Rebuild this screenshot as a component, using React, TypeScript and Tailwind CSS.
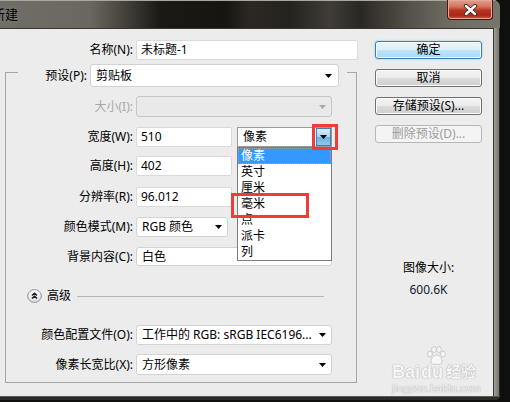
import React from "react";

const F = "font-['Noto_Sans','Noto_Sans_CJK_SC',sans-serif]";

function Arrow({ color = "#000" }: { color?: string }) {
  return (
    <svg width="7" height="4" viewBox="0 0 7 4" className="shrink-0">
      <path d="M0 0H7L3.5 4Z" fill={color} />
    </svg>
  );
}

function Label({ children, disabled, w = "w-[127px]" }: { children: React.ReactNode; disabled?: boolean; w?: string }) {
  return (
    <div className={`${w} shrink-0 text-right text-[12px] leading-[14px] ${disabled ? "text-[#a8a8a8]" : "text-black"}`}>
      {children}
    </div>
  );
}

function Input({ value, w }: { value: string; w: string }) {
  return (
    <div className={`${w} flex h-full items-center rounded-[2px] border border-[#dadada] bg-white pl-[4px] text-[12px] leading-[14px] text-black`}>
      {value}
    </div>
  );
}

function Select({ value, w, pr = "pr-[5px]" }: { value: string; w: string; pr?: string }) {
  return (
    <div className={`${w} ${pr} flex h-full items-center justify-between rounded-[3px] border border-[#d2d2d2] bg-white pl-[5px] text-[12px] leading-[14px] text-black`}>
      <span className="whitespace-nowrap">{value}</span>
      <Arrow />
    </div>
  );
}

function Btn({ children, kind = "normal" }: { children: React.ReactNode; kind?: "normal" | "default" | "disabled" }) {
  const styles = {
    normal:
      "border-[#707070] bg-[linear-gradient(to_bottom,#f3f3f3_0%,#ebebeb_50%,#dcdcdc_50%,#cfcfcf_100%)] text-black shadow-[inset_0_0_0_1px_#fbfbfb]",
    default:
      "border-[#3c7fb1] bg-[linear-gradient(to_bottom,#eaf6fd_0%,#d9f0fc_50%,#bee6fd_50%,#a7d9f5_100%)] text-black shadow-[inset_0_0_0_1px_#ffffff,0_0_2px_#5ec1f3]",
    disabled: "border-[#b5b8ba] bg-[#f4f4f4] text-[#9c9c9c]",
  } as const;
  return (
    <div className={`flex h-[18px] w-[107px] items-center justify-center rounded-[3px] border text-[12px] leading-[14px] ${styles[kind]}`}>
      {children}
    </div>
  );
}

function ExpandIcon() {
  return (
    <svg width="15" height="14" viewBox="0 0 15 14" className="shrink-0">
      <defs>
        <linearGradient id="eg" x1="0" y1="0" x2="0" y2="1">
          <stop offset="0" stopColor="#ffffff" />
          <stop offset="1" stopColor="#dcdcdc" />
        </linearGradient>
      </defs>
      <ellipse cx="7.5" cy="7" rx="6.8" ry="6.4" fill="url(#eg)" stroke="#8e8e8e" strokeWidth="1" />
      <path d="M5 6.6L7.5 4.2L10 6.6M5 9.6L7.5 7.2L10 9.6" stroke="#1a1a1a" strokeWidth="1.4" fill="none" />
    </svg>
  );
}

function CloseBtn() {
  return (
    <div className="mr-[7px] flex h-[20px] w-[46px] items-center justify-center rounded-b-[4px] border border-t-0 border-[#4a1810] bg-[linear-gradient(to_bottom,#e2a190_0%,#d2735e_35%,#b8341f_55%,#a8281a_80%,#c95a40_100%)] shadow-[inset_0_0_0_1px_#e8a898]">
      <svg width="15" height="12" viewBox="0 0 15 12">
        <path d="M3 2L12 10M12 2L3 10" stroke="#3a2a28" strokeWidth="4.2" strokeLinecap="round" />
        <path d="M3 2L12 10M12 2L3 10" stroke="#ffffff" strokeWidth="2.4" strokeLinecap="round" />
      </svg>
    </div>
  );
}

function Paw() {
  return (
    <svg width="20" height="20" viewBox="0 0 20 20">
      <g fill="#f7f7f7" stroke="#c9c9c9" strokeWidth="1">
        <ellipse cx="4" cy="8" rx="2.4" ry="3" />
        <ellipse cx="8" cy="3.5" rx="2.4" ry="3" />
        <ellipse cx="13" cy="3.5" rx="2.4" ry="3" />
        <ellipse cx="17" cy="8" rx="2.4" ry="3" />
        <path d="M10.5 9C7 9 5 13 5 15.5C5 18 7 18.8 10.5 18.2C14 18.8 16 18 16 15.5C16 13 14 9 10.5 9Z" />
      </g>
    </svg>
  );
}

export default function App() {
  const listItems = ["像素", "英寸", "厘米", "毫米", "点", "派卡", "列"];
  return (
    <div className={`relative h-[402px] w-[510px] overflow-hidden bg-[#0f0f0d] ${F}`}>
      <div className="flex h-[400px] w-[500px] flex-col overflow-hidden rounded-tr-[7px] rounded-br-[5px] bg-[#5e5b54]">
        {/* Title bar */}
        <div className="flex h-[28px] shrink-0 items-start bg-[linear-gradient(to_right,#716e67_0%,#6a675f_18%,#3e3c35_26%,#1a1913_32%,#16150f_45%,#2b2922_50%,#25231d_58%,#3f3d36_66%,#2a2822_72%,#55524a_82%,#6f6c64_90%,#77746c_100%)] shadow-[inset_0_1px_0_#a9a79f]">
          <div className="ml-[-8px] mt-[6px] text-[13px] leading-[16px] text-black [text-shadow:0_0_4px_#8a8880]">新建</div>
          <div className="flex-1" />
          <CloseBtn />
        </div>
        {/* Body */}
        <div className="flex flex-1">
          <div className="relative flex w-[494px] border-t border-r border-[#37362f] bg-[#ececec]">
            {/* Left form */}
            <div className="w-[360px] pt-[11px]">
              <div className="flex h-[20px] items-center">
                <Label w="w-[133px]">名称(N):</Label>
                <div className="ml-[3px] flex h-full">
                  <Input value="未标题-1" w="w-[222px]" />
                </div>
              </div>

              {/* Group box */}
              <div className="ml-[5px] mt-[12px] h-[311px] w-[352px] border border-[#a7a7a7]">
                {/* Preset row over top border */}
                <div className="-mt-[9px] ml-[12px] flex h-[23px] w-[329px] items-center bg-[#ececec] pr-[8px]">
                  <Label w="w-[69px]">预设(P):</Label>
                  <div className="ml-[3px] flex h-full">
                    <Select value="剪贴板" w="w-[249px]" pr="pr-[6px]" />
                  </div>
                </div>

                <div className="mt-[9px] flex h-[21px] items-center">
                  <Label disabled>大小(I):</Label>
                  <div className="ml-[3px] flex h-full">
                    <div className="flex h-full w-[196px] items-center justify-end rounded-[3px] border border-[#c6c6c6] bg-[#e9e9e9] pr-[5px]">
                      <Arrow color="#a9a9a9" />
                    </div>
                  </div>
                </div>

                <div className="mt-[10px] flex h-[20px] items-center">
                  <Label>宽度(W):</Label>
                  <div className="ml-[3px] flex h-full gap-[5px]">
                    <Input value="510" w="w-[96px]" />
                    <div className="relative h-full w-[95px]">
                      <div className="flex h-full w-full items-center justify-between border border-[#9a9a9a] bg-white pl-[5px] text-[12px] leading-[14px] text-black">
                        <span>像素</span>
                        <div className="flex h-full w-[15px] items-center justify-center border border-[#3c7fb1] bg-[linear-gradient(to_bottom,#d9eefb_0%,#a9d4f2_50%,#6fb1e0_52%,#8fc6ec_100%)]">
                          <Arrow />
                        </div>
                      </div>
                      {/* dropdown list */}
                      <div className="absolute left-0 top-[20px] z-10 h-[114px] w-[95px] border border-[#7c7c7c] bg-white">
                        {listItems.map((it, i) => (
                          <div key={it} className="h-[16px]">
                            {i === 0 ? (
                              <div className="flex h-full items-center border border-dotted border-[#d79a4c] bg-[#3399ff] pl-[2px] text-[12px] leading-[14px] text-white">
                                {it}
                              </div>
                            ) : (
                              <div className="flex h-full items-center pl-[3px] text-[12px] leading-[14px] text-black">{it}</div>
                            )}
                          </div>
                        ))}
                      </div>
                      {/* red annotation boxes */}
                      <div className="absolute left-[75px] top-[-3px] z-20 h-[26px] w-[26px] border-[3px] border-[#f03b3b]" />
                      <div className="absolute left-[-6px] top-[66px] z-20 h-[25px] w-[78px] border-[3px] border-[#f03b3b]" />
                    </div>
                  </div>
                </div>

                <div className="mt-[9px] flex h-[20px] items-center">
                  <Label>高度(H):</Label>
                  <div className="ml-[3px] flex h-full">
                    <Input value="402" w="w-[96px]" />
                  </div>
                </div>

                <div className="mt-[11px] flex h-[20px] items-center">
                  <Label>分辨率(R):</Label>
                  <div className="ml-[3px] flex h-full">
                    <Input value="96.012" w="w-[96px]" />
                  </div>
                </div>

                <div className="mt-[10px] flex h-[20px] items-center">
                  <Label>颜色模式(M):</Label>
                  <div className="ml-[3px] flex h-full">
                    <Select value="RGB 颜色" w="w-[92px]" />
                  </div>
                </div>

                <div className="mt-[10px] flex h-[19px] items-center">
                  <Label>背景内容(C):</Label>
                  <div className="ml-[3px] flex h-full">
                    <Select value="白色" w="w-[196px]" />
                  </div>
                </div>

                <div className="mt-[23px] flex h-[14px] items-center pl-[21px] pr-[32px]">
                  <ExpandIcon />
                  <span className="ml-[5px] text-[12px] leading-[14px] text-black">高级</span>
                  <div className="ml-[6px] h-px flex-1 bg-[#b4b4b4]" />
                </div>

                <div className="mt-[22px] flex h-[20px] items-center">
                  <Label>颜色配置文件(O):</Label>
                  <div className="ml-[3px] flex h-full">
                    <Select value="工作中的 RGB: sRGB IEC6196..." w="w-[196px]" />
                  </div>
                </div>

                <div className="mt-[9px] flex h-[21px] items-center">
                  <Label>像素长宽比(X):</Label>
                  <div className="ml-[3px] flex h-full">
                    <Select value="方形像素" w="w-[196px]" />
                  </div>
                </div>
              </div>
            </div>

            {/* Right column */}
            <div className="ml-[15px] flex w-[107px] flex-col pt-[12px]">
              <Btn kind="default">确定</Btn>
              <div className="mt-[10px]">
                <Btn>取消</Btn>
              </div>
              <div className="mt-[10px]">
                <Btn>存储预设(S)...</Btn>
              </div>
              <div className="mt-[10px]">
                <Btn kind="disabled">删除预设(D)...</Btn>
              </div>
              <div className="mt-[118px] text-center text-[12px] leading-[14px] text-black">图像大小:</div>
              <div className="mt-[8px] text-center text-[12px] leading-[14px] text-[#101830]">600.6K</div>
            </div>

            {/* Baidu watermark */}
            <div className="pointer-events-none absolute left-[392px] top-[317px] w-[92px] select-none">
              <div className="ml-[34px] h-[18px]">
                <Paw />
              </div>
              <div className="flex items-end font-['Liberation_Sans','Noto_Sans_CJK_SC',sans-serif] text-[18px] font-bold leading-[16px] text-[#f6f6f6] [text-shadow:0_0_1px_#a8a8a8,0_0_1px_#a8a8a8]">
                <span>Bai</span>
                <span className="ml-[1px]">du</span>
                <span className="ml-[3px] text-[15px]">经验</span>
              </div>
              <div className="mt-[3px] font-['Liberation_Sans',sans-serif] text-[11px] leading-[11px] text-[#f4f4f4] [text-shadow:0_0_1px_#b0b0b0,0_0_1px_#b0b0b0]">
                jingyan.baidu.com
              </div>
            </div>
          </div>
          <div className="w-[6px] border-r border-[#2c2b25] bg-[linear-gradient(to_right,#a09e96,#76746c)]" />
        </div>
        <div className="h-[4px] shrink-0 border-t border-[#5a5850] bg-[#2c2b26]" />
      </div>
    </div>
  );
}
